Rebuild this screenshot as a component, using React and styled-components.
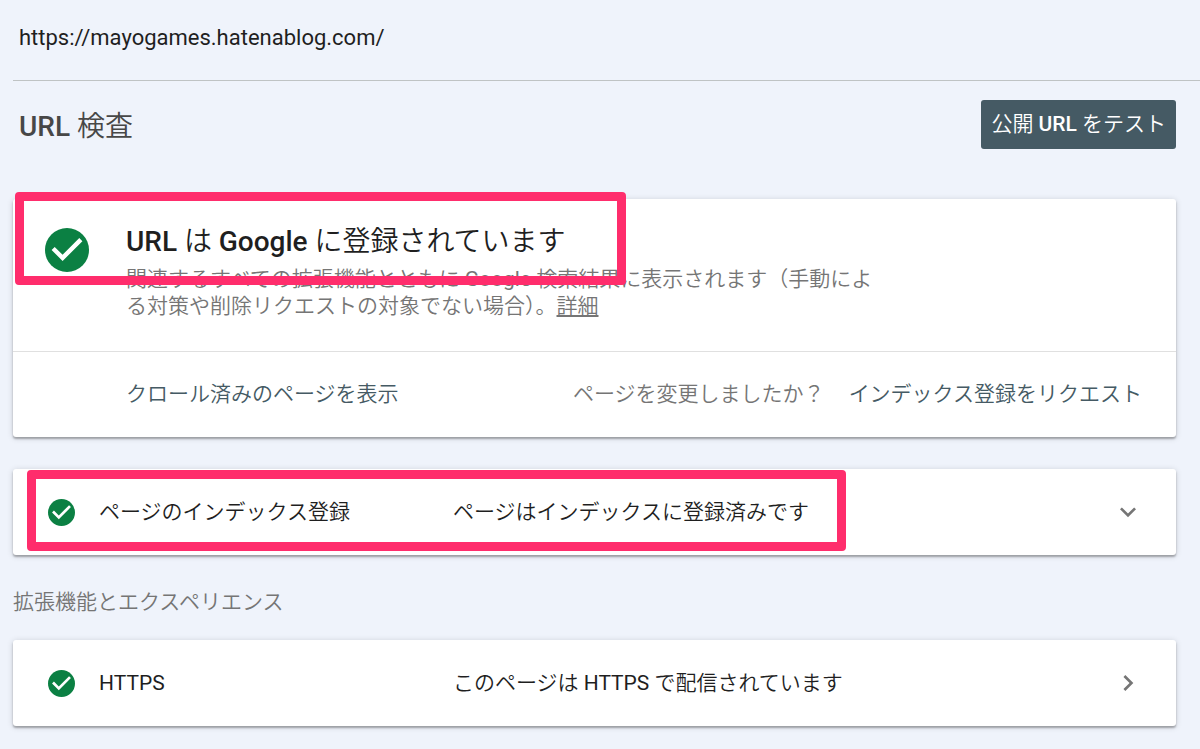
import React from "react";
import styled, { createGlobalStyle } from "styled-components";

const GlobalStyle = createGlobalStyle`
  * { box-sizing: border-box; }
  body {
    margin: 0;
    background: #eff3fb;
    color: #1f1f1f;
    font-family: Roboto, "Noto Sans CJK JP", sans-serif;
    font-size: 21px;
    font-weight: 350;
    line-height: 27px;
  }
`;

const Page = styled.div`
  padding-left: 13px;
`;

const Header = styled.header`
  height: 81px;
  padding-left: 6px;
  border-bottom: 1px solid #bfc3c4;
`;

const UrlField = styled.input`
  width: 100%;
  height: 74px;
  padding: 0;
  border: 0;
  outline: 0;
  background: transparent;
  color: #1f1f1f;
  font: 400 22px Roboto, sans-serif;
`;

const Main = styled.main`
  padding-right: 24px;
  padding-bottom: 22px;
`;

const TitleBar = styled.div`
  display: flex;
  align-items: flex-end;
  justify-content: space-between;
  padding: 19px 0 50px 6px;
`;

const Title = styled.h1`
  margin: 0;
  color: #474747;
  font-size: 28px;
  font-weight: 350;
  line-height: 44px;
`;

const Latin = styled.span`
  font-weight: ${(p) => (p.$strong ? 500 : 400)};
`;

const TestButton = styled.button`
  height: 49px;
  padding: 0 10px;
  border: 0;
  border-radius: 3px;
  background: #455a64;
  color: #fff;
  font: inherit;
`;

const Card = styled.section`
  position: relative;
  border-radius: 3px;
  background: #fff;
  box-shadow: 0 2px 2px rgba(0, 0, 0, 0.28), 0 1px 6px rgba(0, 0, 0, 0.16);
`;

const Verdict = styled.div`
  display: flex;
  gap: 37px;
  padding: 25px 32px 31px;
`;

const VerdictIcon = styled.div`
  padding-top: 4px;
  line-height: 0;
`;

const VerdictTitle = styled.h2`
  margin: 0 0 6px;
  font-size: 28px;
  font-weight: 350;
  line-height: 36px;
`;

const Description = styled.p`
  max-width: 756px;
  margin: 0;
  color: #757575;
`;

const MoreLink = styled.a`
  color: inherit;
  text-decoration: underline;
`;

const Actions = styled.div`
  display: flex;
  align-items: center;
  height: 86px;
  padding: 0 34px 0 113px;
  border-top: 1px solid #e0e0e0;
`;

const Hint = styled.span`
  margin: 0 24px 0 auto;
  color: #757575;
`;

const TextButton = styled.button`
  padding: 0;
  border: 0;
  background: none;
  color: #455a64;
  font: inherit;
`;

const ResultCard = styled(Card)`
  margin-top: ${(p) => p.$gap}px;
`;

const ResultRow = styled.button`
  display: grid;
  grid-template-columns: 27px 330px 1fr 32px;
  column-gap: 24px;
  align-items: center;
  width: 100%;
  height: 86px;
  padding: 0 32px 0 35px;
  border: 0;
  background: none;
  color: inherit;
  font: inherit;
  text-align: left;
`;

const SectionLabel = styled.h3`
  margin: 34px 0 24px;
  color: #757575;
  font-size: 21px;
  font-weight: 350;
`;

const Highlight = styled.div`
  position: absolute;
  top: ${(p) => p.$top}px;
  left: ${(p) => p.$left}px;
  width: ${(p) => p.$width}px;
  height: ${(p) => p.$height}px;
  border: 9px solid #ff2d6c;
  border-radius: 4px;
  pointer-events: none;
`;

const Icon = styled.svg`
  display: block;
  width: ${(p) => p.$size}px;
  height: ${(p) => p.$size}px;
`;

const CheckIcon = ({ size }) => (
  <Icon $size={size} viewBox="2 2 20 20" aria-hidden="true">
    <circle cx="12" cy="12" r="10" fill="#0b8043" />
    <path fill="#fff" d="M10 17l-5-5 1.41-1.41L10 14.17l7.59-7.59L19 8z" />
  </Icon>
);

const chevrons = {
  down: "M16.59 8.59L12 13.17 7.41 8.59 6 10l6 6 6-6z",
  right: "M10 6L8.59 7.41 13.17 12l-4.58 4.59L10 18l6-6z",
};

const Chevron = ({ direction }) => (
  <Icon $size={32} viewBox="0 0 24 24" aria-hidden="true">
    <path fill="#757575" d={chevrons[direction]} />
  </Icon>
);

export default function App() {
  return (
    <>
      <GlobalStyle />
      <Page lang="ja">
        <Header>
          <UrlField
            type="text"
            aria-label="URL"
            defaultValue="https://mayogames.hatenablog.com/"
          />
        </Header>
        <Main>
          <TitleBar>
            <Title>
              <Latin $strong>URL</Latin> 検査
            </Title>
            <TestButton type="button">
              公開 <Latin $strong>URL</Latin> をテスト
            </TestButton>
          </TitleBar>

          <Card>
            <Verdict>
              <VerdictIcon>
                <CheckIcon size={44} />
              </VerdictIcon>
              <div>
                <VerdictTitle>
                  <Latin $strong>URL</Latin> は <Latin $strong>Google</Latin>{" "}
                  に登録されています
                </VerdictTitle>
                <Description>
                  関連するすべての拡張機能とともに <Latin>Google</Latin>{" "}
                  検索結果に表示されます（手動による対策や削除リクエストの対象でない場合）。
                  <MoreLink href="#details">詳細</MoreLink>
                </Description>
              </div>
            </Verdict>
            <Actions>
              <TextButton type="button">クロール済みのページを表示</TextButton>
              <Hint>ページを変更しましたか？</Hint>
              <TextButton type="button">インデックス登録をリクエスト</TextButton>
            </Actions>
            <Highlight $top={-7} $left={2} $width={611} $height={93} />
          </Card>

          <ResultCard $gap={32}>
            <ResultRow type="button" aria-expanded="false">
              <CheckIcon size={27} />
              <span>ページのインデックス登録</span>
              <span>ページはインデックスに登録済みです</span>
              <Chevron direction="down" />
            </ResultRow>
            <Highlight $top={1} $left={14} $width={819} $height={81} />
          </ResultCard>

          <SectionLabel>拡張機能とエクスペリエンス</SectionLabel>

          <Card>
            <ResultRow type="button">
              <CheckIcon size={27} />
              <Latin>HTTPS</Latin>
              <span>
                このページは <Latin>HTTPS</Latin> で配信されています
              </span>
              <Chevron direction="right" />
            </ResultRow>
          </Card>
        </Main>
      </Page>
    </>
  );
}
